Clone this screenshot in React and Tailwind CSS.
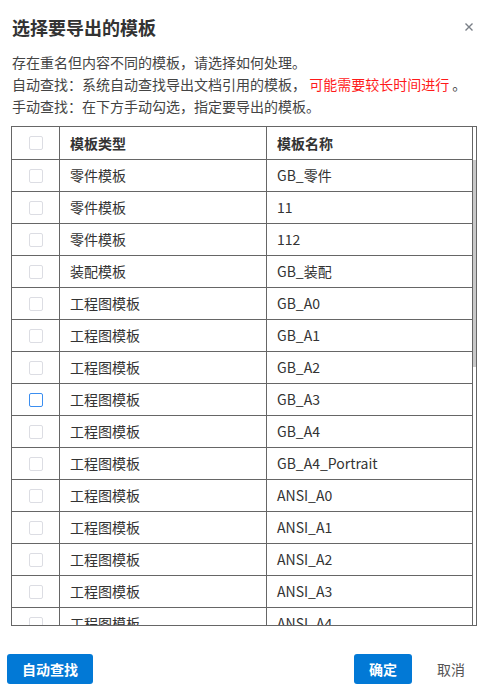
import { useState } from 'react';

const rows = [
  ['零件模板', 'GB_零件'],
  ['零件模板', '11'],
  ['零件模板', '112'],
  ['装配模板', 'GB_装配'],
  ['工程图模板', 'GB_A0'],
  ['工程图模板', 'GB_A1'],
  ['工程图模板', 'GB_A2'],
  ['工程图模板', 'GB_A3'],
  ['工程图模板', 'GB_A4'],
  ['工程图模板', 'GB_A4_Portrait'],
  ['工程图模板', 'ANSI_A0'],
  ['工程图模板', 'ANSI_A1'],
  ['工程图模板', 'ANSI_A2'],
  ['工程图模板', 'ANSI_A3'],
  ['工程图模板', 'ANSI_A4'],
];

const Checkbox = ({ active }) => (
  <span
    className={`block w-[14px] h-[14px] rounded-[2px] border bg-white ${
      active ? 'border-[#3b8ef0]' : 'border-[#dcdde3]'
    }`}
  />
);

export default function App() {
  const [hovered] = useState(7);

  return (
    <div
      className="w-[487px] h-[691px] bg-white flex flex-col text-[#333]"
      style={{ fontFamily: '"Noto Sans CJK SC", "Noto Sans", sans-serif' }}
    >
      {/* header */}
      <div className="flex items-center justify-between pl-3 pr-[13px] pt-[15px]">
        <h2 className="text-[18px] leading-[24px] font-bold text-[#333]">选择要导出的模板</h2>
        <button className="w-[10px] h-[10px] flex items-center justify-center">
          <svg width="8" height="8" viewBox="0 0 8 8">
            <path d="M0.5 0.5 L7.5 7.5 M7.5 0.5 L0.5 7.5" stroke="#7a7f87" strokeWidth="1.4" />
          </svg>
        </button>
      </div>

      <div className="mt-3 px-3 text-[14px] leading-[22px] text-[#444]">
        <p>存在重名但内容不同的模板，请选择如何处理。</p>
        <p>
          自动查找：系统自动查找导出文档引用的模板， <span className="text-[#ff1a1a]">可能需要较长时间进行</span> 。
        </p>
        <p>手动查找：在下方手动勾选，指定要导出的模板。</p>
      </div>

      {/* table */}
      <div className="mt-[9px] ml-[11px] w-[466px] h-[500px] border border-[#666] flex overflow-hidden">
        <div className="w-[461px] border-r border-[#666] flex flex-col text-[14px]">
          <div className="h-[33px] shrink-0 flex border-b border-[#666] font-bold">
            <div className="w-[48px] border-r border-[#666] flex items-center justify-center">
              <Checkbox />
            </div>
            <div className="w-[207px] border-r border-[#666] flex items-center pl-[10px]">模板类型</div>
            <div className="flex-1 flex items-center pl-[10px]">模板名称</div>
          </div>
          {rows.map(([type, name], i) => (
            <div key={i} className="h-[32px] shrink-0 flex border-b border-[#666]">
              <div className="w-[48px] border-r border-[#666] flex items-center justify-center">
                <Checkbox active={i === hovered} />
              </div>
              <div className="w-[207px] border-r border-[#666] flex items-center pl-[10px]">{type}</div>
              <div className="flex-1 flex items-center pl-[10px]">{name}</div>
            </div>
          ))}
        </div>
        <div className="flex-1 flex flex-col">
          <div className="h-[33px] shrink-0" />
          <div className="h-[207px] bg-[#c8c8c8]" />
        </div>
      </div>

      {/* footer */}
      <div className="mt-[28px] flex items-center justify-between px-[7px]">
        <button className="w-[86px] h-[30px] rounded-[3px] bg-[#0279d6] text-white text-[14px] font-bold">
          自动查找
        </button>
        <div className="flex items-center">
          <button className="w-[58px] h-[30px] rounded-[3px] bg-[#0279d6] text-white text-[14px] font-bold">
            确定
          </button>
          <button className="ml-[10px] w-[58px] h-[30px] text-[14px] text-[#555]">取消</button>
        </div>
      </div>
    </div>
  );
}
